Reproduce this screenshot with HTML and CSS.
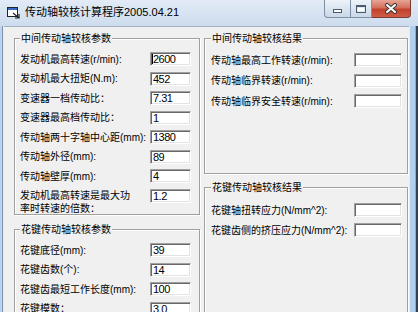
FILE: index.html
```html
<!DOCTYPE html>
<html>
<head>
<meta charset="utf-8">
<link rel="stylesheet" href="styles.css">
</head>
<body>
<div class="window">
  <div class="titlebar">
    <svg class="app-icon" width="13" height="13" viewBox="0 0 13 13">
      <rect x="0.5" y="1.5" width="10" height="9" fill="#fff" stroke="#222"/>
      <rect x="1" y="2" width="9" height="2" fill="#3a6bc4"/>
      <path d="M6 7 L12 12 M8 12 L12 12 L12 8" stroke="#222" stroke-width="1.2" fill="none"/>
    </svg>
    <span class="title">传动轴较核计算程序2005.04.21</span>
    <div class="caption-buttons">
      <div class="cbtn cbtn-min"><span class="glyph-min"></span></div>
      <div class="cbtn cbtn-max"><span class="glyph-max"></span></div>
      <div class="cbtn cbtn-close">
        <svg width="14" height="11" viewBox="0 0 14 11">
          <path d="M3 2 L11 9 M11 2 L3 9" stroke="#3b3b3b" stroke-width="4" stroke-linecap="round"/>
          <path d="M3 2 L11 9 M11 2 L3 9" stroke="#fff" stroke-width="2" stroke-linecap="round"/>
        </svg>
      </div>
    </div>
  </div>
  <div class="frame-body">
    <div class="frame-left"></div>
    <div class="client">
      <div class="col col-left">
        <div class="group g1">
          <span class="caption">中间传动轴较核参数</span>
          <div class="rows rows-left">
            <div class="row"><span class="label">发动机最高转速(r/min):</span><div class="field"><span class="caret"></span>2600</div></div>
            <div class="row"><span class="label">发动机最大扭矩(N.m):</span><div class="field">452</div></div>
            <div class="row"><span class="label">变速器一档传动比：</span><div class="field">7.31</div></div>
            <div class="row"><span class="label">变速器最高档传动比：</span><div class="field">1</div></div>
            <div class="row"><span class="label">传动轴两十字轴中心距(mm):</span><div class="field">1380</div></div>
            <div class="row"><span class="label">传动轴外径(mm):</span><div class="field">89</div></div>
            <div class="row"><span class="label">传动轴壁厚(mm):</span><div class="field">4</div></div>
            <div class="row row-tall"><span class="label label-2l"><span class="line">发动机最高转速是最大功</span><span class="line">率时转速的倍数：</span></span><div class="field">1.2</div></div>
          </div>
        </div>
        <div class="group g2">
          <span class="caption">花键传动轴较核参数</span>
          <div class="rows rows-left">
            <div class="row"><span class="label">花键底径(mm):</span><div class="field">39</div></div>
            <div class="row"><span class="label">花键齿数(个):</span><div class="field">14</div></div>
            <div class="row"><span class="label">花键齿最短工作长度(mm):</span><div class="field">100</div></div>
            <div class="row"><span class="label">花键模数：</span><div class="field">3.0</div></div>
          </div>
        </div>
      </div>
      <div class="col col-right">
        <div class="group g3">
          <span class="caption">中间传动轴较核结果</span>
          <div class="rows rows-r1">
            <div class="row"><span class="label">传动轴最高工作转速(r/min):</span><div class="field field-wide"></div></div>
            <div class="row"><span class="label">传动轴临界转速(r/min):</span><div class="field field-wide"></div></div>
            <div class="row"><span class="label">传动轴临界安全转速(r/min):</span><div class="field field-wide"></div></div>
          </div>
        </div>
        <div class="group g4">
          <span class="caption">花键传动轴较核结果</span>
          <div class="rows rows-r2">
            <div class="row"><span class="label">花键轴扭转应力(N/mm^2):</span><div class="field field-wide"></div></div>
            <div class="row"><span class="label">花键齿侧的挤压应力(N/mm^2):</span><div class="field field-wide"></div></div>
          </div>
        </div>
      </div>
    </div>
    <div class="frame-right"></div>
  </div>
</div>
</body>
</html>
```

FILE: styles.css
```css
* { box-sizing: border-box; }

body {
  margin: 0;
  background: #fff;
  font-family: "Liberation Sans", "Noto Sans CJK SC", sans-serif;
  color: #000;
}

.window {
  width: 418px;
  height: 312px;
  display: flex;
  flex-direction: column;
  overflow: hidden;
  background: linear-gradient(to bottom, #e2ebf6, #cddcee 26px, #c3d7ee);
}

.titlebar {
  height: 26px;
  flex-shrink: 0;
  display: flex;
  align-items: flex-start;
}

.app-icon {
  margin: 6px 0 0 7px;
  flex-shrink: 0;
}

.title {
  font-size: 11px;
  line-height: 14px;
  margin: 5px 0 0 5px;
  white-space: nowrap;
}

.caption-buttons {
  margin-left: auto;
  margin-right: 7px;
  display: flex;
}

.cbtn {
  height: 18px;
  display: flex;
  align-items: center;
  justify-content: center;
  border: 1px solid #7f8fa5;
  border-top: none;
}

.cbtn-min {
  width: 26px;
  border-right: none;
  border-bottom-left-radius: 4px;
  background: linear-gradient(to bottom, #eef3f9, #dbe5f0 50%, #cad8e8);
  align-items: flex-end;
  padding-bottom: 4px;
}

.cbtn-max {
  width: 22px;
  background: linear-gradient(to bottom, #eef3f9, #dbe5f0 50%, #cad8e8);
}

.cbtn-close {
  width: 39px;
  border-left: none;
  border-color: #7b3a31;
  border-bottom-right-radius: 4px;
  background: linear-gradient(to bottom, #e6a596, #d4705c 45%, #c2412c 55%, #cf5e47);
}

.glyph-min {
  width: 9px;
  height: 4px;
  border: 1px solid #4c5c70;
  background: #fff;
}

.glyph-max {
  width: 10px;
  height: 8px;
  border: 1px solid #4c5c70;
  border-top-width: 2px;
  background: #fff;
  box-shadow: inset 0 0 0 1px #dfe7f0;
}

.frame-body {
  flex: 1;
  display: flex;
  min-height: 0;
}

.frame-left {
  width: 4px;
  flex-shrink: 0;
  background: linear-gradient(to right, #bcd3ee 0 2px, #7f95ae 2px 3px, #e4ebf3 3px 4px);
}

.frame-right {
  width: 9px;
  flex-shrink: 0;
  background: linear-gradient(to right, #e4ebf3 0 1px, #b2d1f1 1px 6px, #8ca8c6 6px 7px, #34414f 7px 9px);
}

.client {
  width: 405px;
  flex-shrink: 0;
  background: #f0f0f0;
  border-top: 1px solid #9fb1c6;
  display: flex;
  gap: 4px;
  padding: 11px 0 0 10px;
  overflow: hidden;
}

.col {
  display: flex;
  flex-direction: column;
  flex-shrink: 0;
}

.col-left { width: 186px; }
.col-right { width: 204px; }

.group {
  position: relative;
  flex-shrink: 0;
  border: 1px solid #a0a0a0;
  box-shadow: inset 1px 1px 0 #fff, 1px 1px 0 #fff;
}

.caption {
  position: absolute;
  top: -7px;
  left: 5px;
  padding: 0 1px;
  background: #f0f0f0;
  font-size: 10px;
  line-height: 13px;
  white-space: nowrap;
}

.g3 .caption, .g4 .caption { left: 6px; }

.g1 { height: 177px; padding: 13px 8px 0 5px; }
.g2 { margin-top: 14px; height: 110px; padding: 13px 8px 0 5px; }
.g3 { height: 136px; padding: 14px 5px 0 6px; }
.g4 { margin-top: 13px; height: 140px; padding: 15px 5px 0 6px; }

.rows {
  display: flex;
  flex-direction: column;
}

.rows-left { gap: 5.5px; }
.rows-r1 { gap: 6.5px; }
.rows-r2 { gap: 6px; }

.row {
  display: flex;
  align-items: center;
  justify-content: space-between;
  height: 14px;
}

.row-tall {
  height: 27px;
  align-items: flex-start;
}

.label {
  font-size: 10px;
  line-height: 13px;
  white-space: nowrap;
}

.label-2l {
  display: flex;
  flex-direction: column;
}

.line {
  display: block;
  height: 13px;
  line-height: 13px;
}

.field {
  width: 41px;
  height: 14px;
  flex-shrink: 0;
  display: flex;
  align-items: center;
  padding-left: 2px;
  background: #fff;
  border: 1px solid;
  border-color: #a0a0a0 #fff #fff #a0a0a0;
  box-shadow: inset 1px 1px 0 #696969, inset -1px -1px 0 #e3e3e3;
  font-family: "Liberation Sans", sans-serif;
  font-size: 11px;
  letter-spacing: -0.5px;
  line-height: 12px;
}

.field-wide { width: 48px; }

.caret {
  width: 1px;
  height: 10px;
  background: #000;
  margin-left: -1px;
}
```
